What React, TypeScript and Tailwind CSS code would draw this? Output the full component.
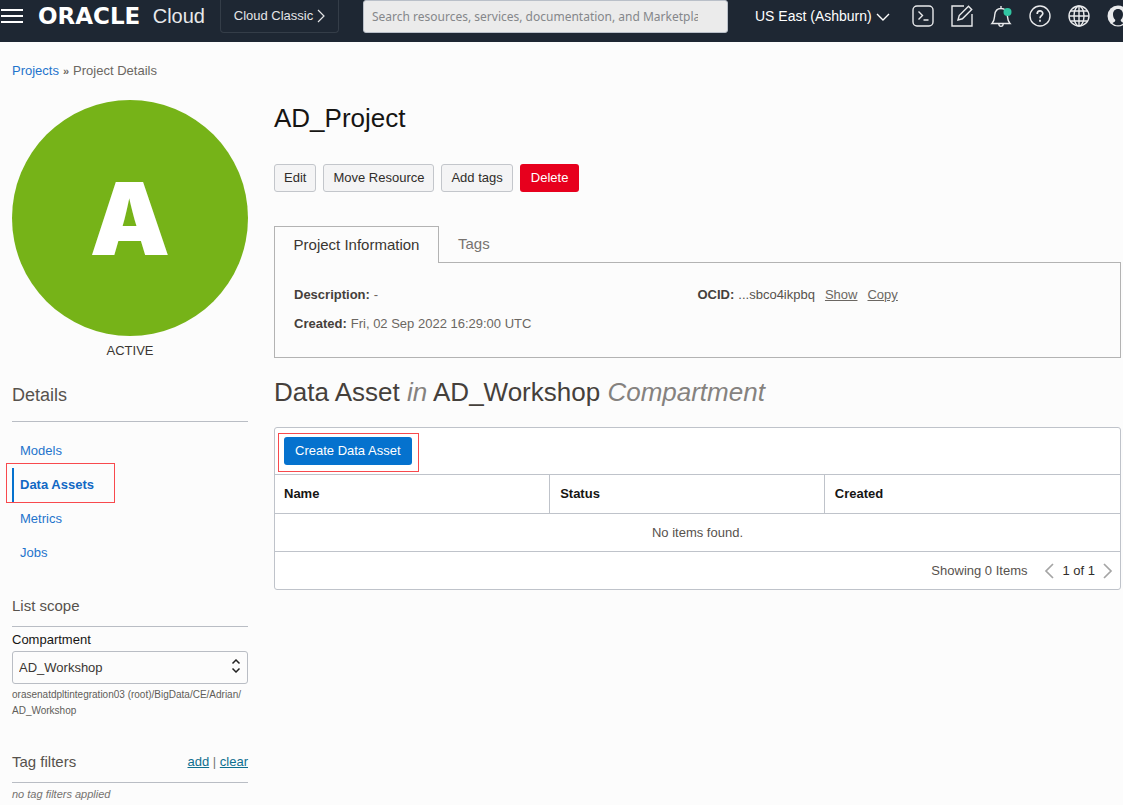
import type { ReactNode } from 'react';

function Icon({ children, className = 'size-6' }: { children: ReactNode; className?: string }) {
  return (
    <svg viewBox="0 0 24 24" fill="none" stroke="currentColor" strokeWidth="1.4" aria-hidden="true" className={className}>
      {children}
    </svg>
  );
}

function TopBar() {
  return (
    <header className="flex h-[42px] items-start overflow-hidden bg-[#1e2733] text-white">
      <button type="button" aria-label="Open navigation menu" className="mt-2 shrink-0">
        <svg viewBox="0 0 24 18" className="h-[18px] w-6" fill="none" stroke="currentColor" strokeWidth="2" aria-hidden="true">
          <path d="M1 2h22M1 8h22M1 14h22" />
        </svg>
      </button>
      <a href="#home" className="ml-[14px] flex h-8 w-[167px] shrink-0 items-center justify-between whitespace-nowrap">
        <span className="font-['DejaVu_Sans'] text-[23px] font-bold leading-8">ORACLE</span>
        <span className="text-[20px] leading-8 text-[#e8e9eb]">Cloud</span>
      </a>
      <button
        type="button"
        className="ml-[15px] flex h-[33px] w-[119px] shrink-0 items-center justify-center gap-1 rounded-b-sm border border-t-0 border-[#343d48] text-[13px] text-[#e4e5e7]"
      >
        Cloud Classic
        <svg viewBox="0 0 8 14" className="h-[14px] w-2" fill="none" stroke="currentColor" strokeWidth="1.2" aria-hidden="true">
          <path d="M1 1l6 6-6 6" />
        </svg>
      </button>
      <input
        type="text"
        aria-label="Search"
        placeholder="Search resources, services, documentation, and Marketplace"
        className="ml-6 h-[33px] w-[365px] shrink-0 rounded-[3px] border border-[#b9bfc8] bg-[#ebebeb] pl-2 pr-[29px] font-['Noto_Sans'] text-[12px] text-gray-800 placeholder:text-[#85878a]"
      />
      <button type="button" className="ml-[27px] flex h-[33px] shrink-0 items-center gap-1 whitespace-nowrap text-[14px]">
        US East (Ashburn)
        <svg viewBox="0 0 14 8" className="h-2 w-[14px]" fill="none" stroke="currentColor" strokeWidth="1.4" aria-hidden="true">
          <path d="M1 1l6 6 6-6" />
        </svg>
      </button>
      <div className="ml-[21px] mt-1 flex shrink-0 gap-[15px] text-[#e9eaec]">
        <button type="button" aria-label="Cloud Shell">
          <Icon>
            <rect x="2" y="2" width="20" height="20" rx="4" />
            <path d="M7.500 7.500l4 4-4 4M12.500 16h5" />
          </Icon>
        </button>
        <button type="button" aria-label="Announcements">
          <Icon>
            <path d="M14 2H2v20h20V10" />
            <path d="M8 16l1.200-4.400L18.500 2.300l3.200 3.200-9.300 9.300z" />
          </Icon>
        </button>
        <button type="button" aria-label="Notifications">
          <Icon>
            <path d="M3 19.500c2.500-2.500 2.300-5 2.700-8.500.4-4 2.700-6.500 6.300-6.500s5.900 2.500 6.300 6.500c.4 3.500.2 6 2.700 8.500zM12 4.500V2M9.800 20c.2 3.200 4.200 3.200 4.400 0" />
            <circle cx="18.500" cy="8" r="4" fill="#31c5a2" stroke="none" />
          </Icon>
        </button>
        <button type="button" aria-label="Help">
          <Icon>
            <circle cx="12" cy="12" r="10" />
            <path d="M9.200 10c0-4 5.600-4 5.600-.5 0 2-2.800 2.400-2.800 4.700M12 15.700v2" strokeWidth="1.700" />
          </Icon>
        </button>
        <button type="button" aria-label="Language">
          <Icon>
            <circle cx="12" cy="12" r="10" />
            <ellipse cx="12" cy="12" rx="5" ry="10" />
            <path d="M12 2v20M2 12h20M3.500 7h17M3.500 17h17" />
          </Icon>
        </button>
        <button type="button" aria-label="Profile">
          <Icon>
            <circle cx="12" cy="12" r="10.500" fill="currentColor" stroke="none" />
            <path
              d="M12 5c-3.300 0-5 2.400-5 5.500 0 2.200.8 4 2.200 5.200.3 1.700-.4 2.300-2.700 3.300 1.500 1.600 3.400 2.300 5.500 2.300s4-.7 5.500-2.300c-2.300-1-3-1.600-2.700-3.300 1.400-1.200 2.200-3 2.200-5.200C17 7.400 15.300 5 12 5z"
              fill="#1e2733"
              stroke="none"
            />
          </Icon>
        </button>
      </div>
    </header>
  );
}

function NavItem({ label, active = false }: { label: string; active?: boolean }) {
  return (
    <li className="relative">
      <a
        href={`#${label}`}
        className={
          active
            ? 'flex h-[34px] items-center border-l-2 border-[#0572ce] pl-[6px] font-bold text-[#1168c4]'
            : 'flex h-[34px] items-center pl-2 text-[#1f74cc]'
        }
      >
        {label}
      </a>
      {active && <span className="pointer-events-none absolute -left-[6px] -top-[5px] h-10 w-[109px] border border-[#f8494d]" />}
    </li>
  );
}

function Sidebar() {
  return (
    <aside className="w-[236px] shrink-0">
      <div className="flex aspect-square items-center justify-center rounded-full bg-[#76b318] font-['Inter'] text-[101px] font-black leading-none text-white">
        A
      </div>
      <p className="mt-[5px] text-center leading-5 text-[#3a3632]">ACTIVE</p>

      <h2 className="mt-5 h-[41px] border-b border-[#b9bdc4] text-[18px] leading-7 text-[#57524d]">Details</h2>
      <ul className="mt-3">
        <NavItem label="Models" />
        <NavItem label="Data Assets" active />
        <NavItem label="Metrics" />
        <NavItem label="Jobs" />
      </ul>

      <h2 className="mt-[25px] h-8 border-b border-[#b9bdc4] text-[15px] leading-[22px] text-[#57524d]">List scope</h2>
      <label htmlFor="compartment" className="mt-[3px] block leading-5 text-[#161513]">
        Compartment
      </label>
      <div className="relative mt-px">
        <select
          id="compartment"
          className="h-[33px] w-full appearance-none rounded-[3px] border border-[#b9bdc4] bg-[#fcfcfc] pl-[6px] text-[13px] text-[#3a3632]"
        >
          <option>AD_Workshop</option>
        </select>
        <svg
          viewBox="0 0 10 14"
          className="pointer-events-none absolute right-[7px] top-2 h-[14px] w-[10px] text-[#222]"
          fill="none"
          stroke="currentColor"
          strokeWidth="1.500"
          aria-hidden="true"
        >
          <path d="M1.500 4.500L5 1l3.500 3.500M1.500 9.500L5 13l3.500-3.500" />
        </svg>
      </div>
      <p className="mt-[3px] text-[10px] leading-4 text-[#5f5c59]">
        orasenatdpltintegration03 (root)/BigData/CE/Adrian/
        <br />
        AD_Workshop
      </p>

      <div className="mt-8 flex h-8 items-start justify-between border-b border-[#b9bdc4] leading-[22px]">
        <h2 className="text-[15px] text-[#57524d]">Tag filters</h2>
        <p className="text-[#777]">
          <a href="#add" className="text-[#0f6f8f] underline">add</a>
          {' | '}
          <a href="#clear" className="text-[#0f6f8f] underline">clear</a>
        </p>
      </div>
      <p className="mt-[3px] text-[11px] italic leading-4 text-[#75726f]">no tag filters applied</p>
    </aside>
  );
}

const outlineButton = 'h-7 rounded-[3px] border border-[#c3c6cb] bg-[#f4f4f5] px-[9px] text-[#302d2a]';

function ProjectInformation() {
  return (
    <section className="mt-[34px]">
      <div role="tablist" className="flex h-[37px] items-stretch text-[15px]">
        <button
          type="button"
          role="tab"
          aria-selected="true"
          className="w-[165px] border border-b-0 border-[#b3b3b3] text-[#3a3632]"
        >
          Project Information
        </button>
        <div className="flex grow border-b border-[#b3b3b3]">
          <button type="button" role="tab" aria-selected="false" className="px-[19px] text-[#77736f]">
            Tags
          </button>
        </div>
      </div>
      <div className="grid h-[95px] grid-cols-2 border border-t-0 border-[#b3b3b3] px-[19px] pt-[22px] text-[#6b6762]">
        <dl className="flex flex-col gap-[9px] leading-5">
          <div className="flex gap-1">
            <dt className="font-bold text-[#45403b]">Description:</dt>
            <dd>-</dd>
          </div>
          <div className="flex gap-1">
            <dt className="font-bold text-[#45403b]">Created:</dt>
            <dd>Fri, 02 Sep 2022 16:29:00 UTC</dd>
          </div>
        </dl>
        <dl className="leading-5">
          <div className="flex gap-1">
            <dt className="font-bold text-[#45403b]">OCID:</dt>
            <dd className="flex gap-[10px]">
              <span className="text-[#57524d]">...sbco4ikpbq</span>
              <a href="#show" className="underline">Show</a>
              <a href="#copy" className="underline">Copy</a>
            </dd>
          </div>
        </dl>
      </div>
    </section>
  );
}

function Chevron({ d }: { d: string }) {
  return (
    <svg viewBox="0 0 10 16" className="h-4 w-[10px] text-[#a5a5a5]" fill="none" stroke="currentColor" strokeWidth="1.700" aria-hidden="true">
      <path d={d} />
    </svg>
  );
}

function DataAssets() {
  return (
    <section>
      <h2 className="mt-4 text-[26px] leading-9 text-[#45403b]">
        Data Asset <em className="text-[#85827f]">in</em> AD_Workshop <em className="text-[#85827f]">Compartment</em>
      </h2>
      <div className="mt-[17px] rounded-[3px] border border-[#bfc3ca] bg-white">
        <div className="flex h-[46px] items-center px-[9px]">
          <div className="relative">
            <button type="button" className="block h-7 rounded-[3px] bg-[#0572ce] px-[11px] text-white">
              Create Data Asset
            </button>
            <span className="pointer-events-none absolute -bottom-[7px] -left-[6px] -right-[7px] -top-1 border border-[#f8494d]" />
          </div>
        </div>
        <table className="w-full table-fixed border-collapse text-left">
          <colgroup>
            <col className="w-[32.500%]" />
            <col className="w-[32.500%]" />
            <col />
          </colgroup>
          <thead>
            <tr className="h-[39px] border-y border-[#bfc3ca] text-[#161513]">
              <th className="border-r border-[#bfc3ca] px-[9px]">Name</th>
              <th className="border-r border-[#bfc3ca] px-[10px]">Status</th>
              <th className="px-[10px]">Created</th>
            </tr>
          </thead>
          <tbody>
            <tr className="h-[38px] border-b border-[#bfc3ca]">
              <td colSpan={3} className="text-center text-[#57524d]">No items found.</td>
            </tr>
          </tbody>
        </table>
        <div className="flex h-[37px] items-center justify-end pr-[7px]">
          <span className="mr-[17px] text-[#57524d]">Showing 0 Items</span>
          <button type="button" aria-label="Previous page">
            <Chevron d="M9 1L2 8l7 7" />
          </button>
          <span className="mx-2 text-[#302d2a]">1 of 1</span>
          <button type="button" aria-label="Next page">
            <Chevron d="M1 1l7 7-7 7" />
          </button>
        </div>
      </div>
    </section>
  );
}

export default function App() {
  return (
    <div className="min-h-screen overflow-x-hidden bg-[#fcfcfc] font-['Liberation_Sans',Arial,sans-serif] text-[13px]">
      <TopBar />
      <nav aria-label="Breadcrumb" className="flex gap-1 px-3 pt-[19px] leading-5 text-[#6b6762]">
        <a href="#projects" className="text-[#1f74cc]">Projects</a>
        <span className="text-[11px] font-bold">»</span>
        <span>Project Details</span>
      </nav>
      <div className="flex gap-[26px] pb-1 pl-3 pr-[2px] pt-[19px]">
        <Sidebar />
        <main className="min-w-0 grow">
          <h1 className="text-[26px] leading-9 text-[#161513]">AD_Project</h1>
          <div className="mt-7 flex gap-[7px]">
            <button type="button" className={outlineButton}>Edit</button>
            <button type="button" className={outlineButton}>Move Resource</button>
            <button type="button" className={outlineButton}>Add tags</button>
            <button type="button" className="h-7 rounded-[3px] bg-[#e7001d] px-[11px] text-white">Delete</button>
          </div>
          <ProjectInformation />
          <DataAssets />
        </main>
      </div>
    </div>
  );
}
